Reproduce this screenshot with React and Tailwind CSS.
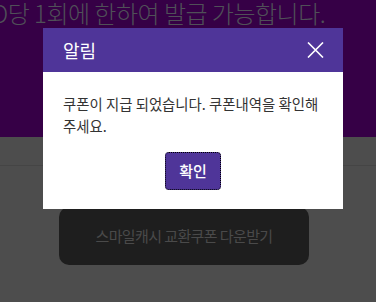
import React from "react";

const font = { fontFamily: '"Noto Sans CJK KR", "Noto Sans", sans-serif' };

export default function App() {
  return (
    <div className="relative w-[376px] h-[302px] overflow-hidden bg-[#4d4d4d]" style={font}>
      {/* underlying page */}
      <div className="h-[137px] bg-[#360046] overflow-hidden">
        <div className="ml-[-14px] whitespace-nowrap text-[24px] leading-[26px] font-light text-[#505058] tracking-[-0.5px]">
          ID당 1회에 한하여 발급 가능합니다.
        </div>
      </div>
      <div className="h-[29px] border-b border-[#454545]"></div>
      <div className="flex pl-[59px] pt-[41px]">
        <div className="w-[250px] h-[58px] rounded-[10px] bg-[#1e1e1e] flex items-center justify-center text-[15px] text-[#4a4a4a] tracking-[-0.6px]">
          스마일캐시 교환쿠폰 다운받기
        </div>
      </div>

      {/* dialog */}
      <div className="absolute left-[43px] top-[28px] w-[300px] bg-white">
        <div className="h-[44px] bg-[#4f3599] flex items-center justify-between px-[20px]">
          <span className="text-white text-[18px] leading-none">알림</span>
          <svg width="17" height="16" viewBox="0 0 17 16" className="mr-[-1px]">
            <path d="M1 0.5 L16 15.5 M16 0.5 L1 15.5" stroke="white" strokeWidth="1.6" />
          </svg>
        </div>
        <div className="px-[20px] pt-[21px] pb-[19px]">
          <p className="text-[14.4px] leading-[22px] text-[#333] break-keep">
            쿠폰이 지급 되었습니다. 쿠폰내역을 확인해 주세요.
          </p>
          <div className="flex justify-center mt-[15px]">
            <button className="w-[56px] h-[38px] rounded-[4px] bg-[#4f3599] text-white text-[15px] font-medium border border-dotted border-black">
              확인
            </button>
          </div>
        </div>
      </div>
    </div>
  );
}
